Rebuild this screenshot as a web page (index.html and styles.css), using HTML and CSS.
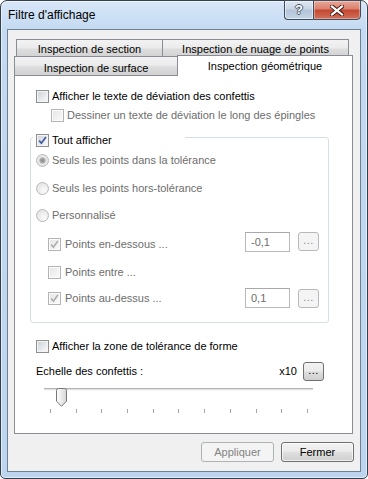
FILE: index.html
```html
<!DOCTYPE html>
<html lang="fr">
<head>
<meta charset="utf-8">
<title>Filtre d'affichage</title>
<link rel="stylesheet" href="styles.css">
</head>
<body>
<div class="window">
  <div class="titlebar">
    <span class="title">Filtre d'affichage</span>
    <div class="caption-btns">
      <div class="cap help"><span>?</span></div>
      <div class="cap close">
        <svg width="14" height="11" viewBox="0 0 14 11">
          <path d="M2 1.5 L12 9.5 M12 1.5 L2 9.5" stroke="#4d1f1a" stroke-width="4.2" stroke-linecap="square" fill="none"/>
          <path d="M2 1.5 L12 9.5 M12 1.5 L2 9.5" stroke="#ffffff" stroke-width="2.2" stroke-linecap="square" fill="none"/>
        </svg>
      </div>
    </div>
  </div>
  <div class="client">
    <div class="tabrow row1">
      <div class="tab t1">Inspection de section</div>
      <div class="tab t2">Inspection de nuage de points</div>
    </div>
    <div class="tabrow row2">
      <div class="tab t3">Inspection de surface</div>
      <div class="tab sel">Inspection géométrique</div>
    </div>
    <div class="panel">
      <div class="row r-conf"><span class="cb"></span><span class="lbl">Afficher le texte de déviation des confettis</span></div>
      <div class="row r-pins dis"><span class="cb"></span><span class="lbl">Dessiner un texte de déviation le long des épingles</span></div>
      <div class="group">
        <div class="row legend"><span class="cb"><svg width="9" height="9" viewBox="0 0 9 9"><path d="M1.2 4.6 L3.4 7.2 L7.9 0.9" stroke="#3e5ba6" stroke-width="1.7" fill="none"/></svg></span><span class="lbl">Tout afficher</span></div>
        <div class="row dis r-rad1"><span class="rb on"></span><span class="lbl">Seuls les points dans la tolérance</span></div>
        <div class="row dis r-rad2"><span class="rb"></span><span class="lbl">Seuls les points hors-tolérance</span></div>
        <div class="row dis r-rad3"><span class="rb"></span><span class="lbl">Personnalisé</span></div>
        <div class="row dis pts r-pts1">
          <span class="cb"><svg width="9" height="9" viewBox="0 0 9 9"><path d="M1.2 4.6 L3.4 7.2 L7.9 0.9" stroke="#a9a9a9" stroke-width="1.5" fill="none"/></svg></span><span class="lbl">Points en-dessous ...</span>
          <span class="field up">-0,1</span><span class="mini">...</span>
        </div>
        <div class="row dis pts r-pts2"><span class="cb"></span><span class="lbl">Points entre ...</span></div>
        <div class="row dis pts r-pts3">
          <span class="cb"><svg width="9" height="9" viewBox="0 0 9 9"><path d="M1.2 4.6 L3.4 7.2 L7.9 0.9" stroke="#a9a9a9" stroke-width="1.5" fill="none"/></svg></span><span class="lbl">Points au-dessus ...</span>
          <span class="field">0,1</span><span class="mini">...</span>
        </div>
      </div>
      <div class="row r-zone"><span class="cb"></span><span class="lbl">Afficher la zone de tolérance de forme</span></div>
      <div class="row r-scale"><span class="scale-lbl">Echelle des confettis :</span><span class="mult">x10</span><span class="mini en">...</span></div>
      <div class="slider">
        <div class="track"></div>
        <svg class="thumb" width="11" height="19" viewBox="0 0 11 19">
          <defs><linearGradient id="tg" x1="0" y1="0" x2="1" y2="0"><stop offset="0" stop-color="#ffffff"/><stop offset="1" stop-color="#d6d6d6"/></linearGradient></defs>
          <path d="M0.5 2.5 Q0.5 0.5 2.5 0.5 H8.5 Q10.5 0.5 10.5 2.5 V13.2 L5.5 18.3 L0.5 13.2 Z" fill="url(#tg)" stroke="#777777"/>
        </svg>
      </div>
      <div class="ticks"><i></i><i></i><i></i><i></i><i></i><i></i><i></i><i></i><i></i><i></i><i></i></div>
    </div>
    <div class="footer">
      <div class="btn disabled">Appliquer</div>
      <div class="btn">Fermer</div>
    </div>
  </div>
</div>
</body>
</html>
```
FILE: styles.css
```css
* { box-sizing: border-box; margin: 0; padding: 0; }
html, body { width: 368px; height: 479px; overflow: hidden; background: #ffffff; }
body { font-family: "Liberation Sans", Arial, sans-serif; font-size: 11px; color: #000; line-height: 13px; }

.window {
  width: 368px; height: 479px;
  border: 1px solid #343f4c;
  border-radius: 7px 7px 5px 5px;
  background: linear-gradient(to bottom, #d8e7f8 0, #c4daf2 28px, #bcd4ee 100%);
  display: flex; flex-direction: column;
  box-shadow: inset 0 0 0 1px rgba(255,255,255,0.55);
}
.titlebar { height: 28px; flex: none; display: flex; align-items: flex-start; padding-left: 7px; }
.title { font-size: 12px; line-height: 28px; color: #000; }
.caption-btns { margin-left: auto; margin-right: 6px; margin-top: -1px; display: flex; }
.cap { height: 20px; border: 1px solid #3f4c5b; display: flex; align-items: center; justify-content: center; }
.help {
  width: 29px; border-right: none; border-radius: 0 0 0 4px;
  background: linear-gradient(to bottom, #dfe8f2 0, #c8d6e5 45%, #b3c5d9 50%, #c3d3e4 100%);
  box-shadow: inset 0 0 0 1px rgba(255,255,255,0.5);
}
.help span { font-weight: bold; font-size: 13px; color: #fff; text-shadow: 1px 0 #4a5666, -1px 0 #4a5666, 0 1px #4a5666, 0 -1px #4a5666; margin-top: -1px; }
.close {
  width: 48px; border-radius: 0 0 4px 0;
  background: linear-gradient(to bottom, #e8a797 0, #d9806c 45%, #c4462f 50%, #d0705a 100%);
  box-shadow: inset 0 0 0 1px rgba(255,255,255,0.35);
}

.client {
  flex: 1; margin: 0 6px 6px;
  border: 1px solid #6f8093;
  background: #f0f0f0;
  padding: 9px 0 0 6px;
  display: flex; flex-direction: column;
}

.tabrow { display: flex; align-items: flex-start; }
.tab {
  border: 1px solid #898c95; border-bottom: none;
  background: linear-gradient(to bottom, #f3f3f3 0, #ebebeb 45%, #dddddd 55%, #d2d2d2 100%);
  text-align: center; white-space: nowrap;
}
.row1 { height: 17px; margin-left: 2px; }
.row1 .tab { height: 18px; padding-top: 3px; }
.t1 { width: 147px; }
.t2 { width: 187px; margin-left: -1px; }
.row2 { height: 19px; }
.t3 { width: 164px; height: 19px; padding-top: 5px; }
.sel {
  width: 176px; height: 21px; margin-top: -1px; margin-left: -1px;
  background: #ffffff; padding-top: 4px;
  position: relative; z-index: 2;
}

.panel {
  width: 339px; height: 359px;
  border: 1px solid #898c95; background: #ffffff;
  padding: 11px 0 0 21px;
}

.row { display: flex; align-items: center; height: 18px; white-space: nowrap; }
.lbl { margin-left: 3px; }
.dis { color: #6d6d6d; }

.cb {
  width: 13px; height: 13px; flex: none;
  border: 1px solid #8e8f8f;
  background: linear-gradient(135deg, #cbcfd5 0, #eef0f2 70%, #f7f7f7 100%);
  box-shadow: inset 0 0 0 1px #f4f4f4;
  display: flex; align-items: center; justify-content: center;
}
.dis .cb { border-color: #b4b4b4; background: linear-gradient(135deg, #e6e6e6, #fafafa); box-shadow: inset 0 0 0 1px #fbfbfb; }
.cb svg { display: block; }

.rb {
  width: 13px; height: 13px; flex: none; border-radius: 50%;
  border: 1px solid #b8b8b8;
  background: radial-gradient(circle at 65% 70%, #fbfbfb 0, #e6e6e6 70%);
}
.rb.on { background: radial-gradient(circle, #8d8d8d 0, #a9a9a9 2.5px, #e2e2e2 3.5px, #f3f3f3 100%); }

.r-pins { margin-top: 1px; padding-left: 15px; }

.group {
  width: 299px; margin-left: -6px; margin-top: 13px;
  border: 1px solid #d5dfe5; border-radius: 3px;
  padding: 0 9px 15px 5px;
}
.legend { margin-top: -7px; margin-left: -3px; padding-left: 3px; width: 152px; background: #fff; }
.r-rad1 { margin-top: 2px; }
.r-rad2 { margin-top: 10px; }
.r-rad3 { margin-top: 9px; }
.pts { padding-left: 12px; }
.pts .lbl { margin-left: 4px; }
.r-pts1 { margin-top: 11px; }
.r-pts2 { margin-top: 10px; }
.r-pts3 { margin-top: 8px; }

.field {
  margin-left: auto; width: 45px; height: 20px;
  border: 1px solid #b9b9b9; border-top-color: #a9a9a9;
  background: #fff; color: #6d6d6d;
  padding-left: 5px; line-height: 18px;
}
.field.up { margin-top: -5px; }
.mini {
  width: 21px; height: 19px; margin-left: 8px;
  border: 1px solid #b5b9bc; border-radius: 3px;
  background: #f4f4f4; color: #8a8a8a;
  text-align: center; line-height: 15px; letter-spacing: 0.5px;
}
.r-pts1 .mini { margin-top: -5px; }

.r-zone { margin-top: 14px; }
.r-scale { margin-top: 7px; height: 19px; width: 288px; }
.mult { margin-left: auto; }
.mini.en {
  margin-left: 6px;
  border-color: #707070; color: #000;
  background: linear-gradient(to bottom, #f2f2f2 0, #ebebeb 45%, #dddddd 55%, #cfcfcf 100%);
}

.slider { position: relative; width: 269px; height: 19px; margin-left: 8px; margin-top: 5px; }
.track { margin-top: 7px; height: 3px; border-top: 1px solid #b3b3b3; background: #e4e4e4; border-bottom: 1px solid #f6f6f6; }
.thumb { position: absolute; left: 12px; top: 0; }
.ticks { display: flex; justify-content: space-between; width: 258px; margin-left: 14px; margin-top: 2px; }
.ticks i { display: block; width: 1px; height: 4px; background: #a6a6a6; }

.footer { display: flex; justify-content: flex-end; gap: 7px; padding-right: 6px; margin-top: 8px; }
.btn {
  width: 73px; height: 20px;
  border: 1px solid #707070; border-radius: 3px;
  background: linear-gradient(to bottom, #f2f2f2 0, #ebebeb 45%, #dddddd 55%, #cfcfcf 100%);
  box-shadow: inset 0 0 0 1px rgba(255,255,255,0.7);
  text-align: center; line-height: 18px;
}
.btn.disabled { border-color: #adb2b5; background: #f4f4f4; color: #838383; box-shadow: none; }
```
